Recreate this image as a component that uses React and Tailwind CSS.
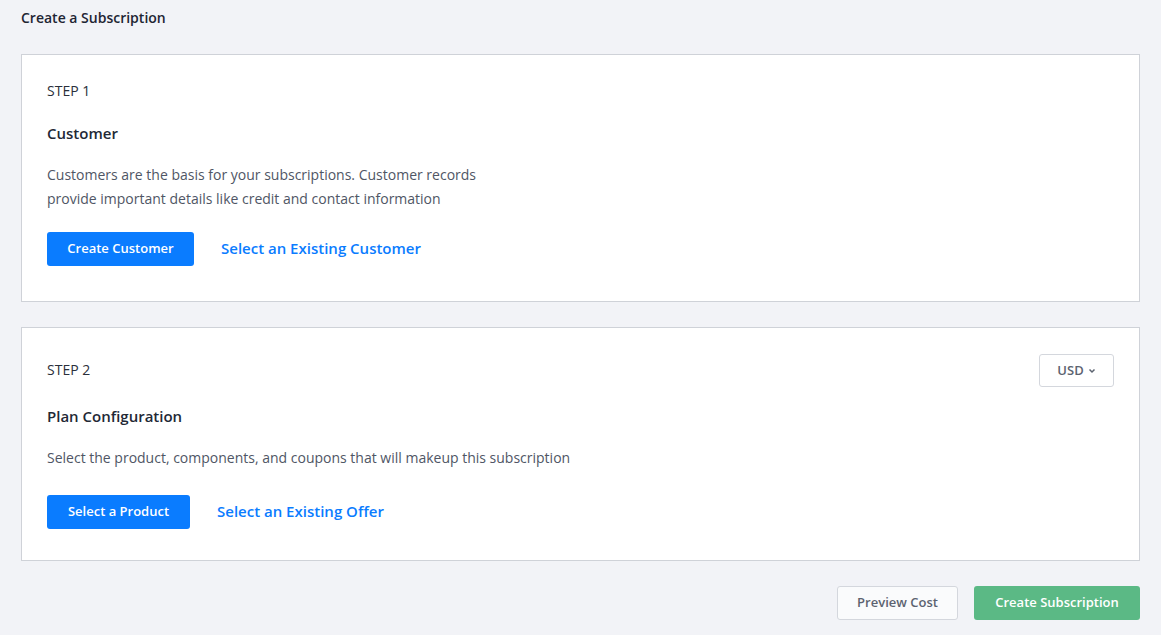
export default function App() {
  const f = { fontFamily: "'Open Sans', Lato, sans-serif" };
  return (
    <div style={f} className="min-h-[635px] bg-[#f2f3f7] px-[21px] pt-[9px] pb-4 text-[#1f2937]">
      <h1 className="text-[14px] font-semibold text-[#1e2533] h-[18px] leading-[18px]">Create a Subscription</h1>
      <div className="mt-[27px] bg-white border border-[#cfd2d8] h-[248px] pl-[25px] pr-[26px] pt-[27px]">
        <div className="text-[14px] text-[#2a2f3a] leading-[18px]">STEP 1</div>
        <div className="mt-6 text-[15px] font-semibold text-[#222835] leading-[18px]">Customer</div>
        <p className="mt-[21px] text-[14px] text-[#4f5665] leading-6">Customers are the basis for your subscriptions. Customer records<br/>provide important details like credit and contact information</p>
        <div className="mt-[21px] flex items-center gap-[27px]">
          <button className="h-[34px] w-[147px] rounded-[3px] bg-[#0a7cff] text-white text-[13px] font-semibold">Create Customer</button>
          <a className="text-[15px] font-semibold text-[#0a7cff] -mt-[2px]">Select an Existing Customer</a>
        </div>
      </div>
      <div className="mt-[25px] bg-white border border-[#cfd2d8] h-[234px] pl-[25px] pr-[25px] pt-[26px]">
        <div className="flex justify-between items-start">
          <div className="text-[14px] text-[#2a2f3a] leading-[18px] pt-[7px]">STEP 2</div>
          <button className="h-[33px] w-[75px] rounded-[3px] border border-[#d4d7dd] text-[13px] font-semibold text-[#5c6370] flex items-center justify-center gap-1">USD <svg width="8" height="8" viewBox="0 0 8 8"><path d="M1.5 2.5 4 5l2.5-2.5" stroke="#5c6370" strokeWidth="1.5" fill="none"/></svg></button>
        </div>
        <div className="mt-[20px] text-[15px] font-semibold text-[#222835] leading-[18px]">Plan Configuration</div>
        <p className="mt-[21px] text-[14px] text-[#4f5665] leading-6">Select the product, components, and coupons that will makeup this subscription</p>
        <div className="mt-[25px] flex items-center gap-[27px]">
          <button className="h-[34px] w-[143px] rounded-[3px] bg-[#0a7cff] text-white text-[13px] font-semibold">Select a Product</button>
          <a className="text-[15px] font-semibold text-[#0a7cff] -mt-[2px]">Select an Existing Offer</a>
        </div>
      </div>
      <div className="mt-[25px] flex justify-end gap-4">
        <button className="h-[34px] w-[121px] rounded-[3px] border border-[#d4d7dd] bg-[#fafbfc] text-[13px] font-semibold text-[#5c6370]">Preview Cost</button>
        <button className="h-[34px] w-[166px] rounded-[3px] bg-[#5bb985] text-white text-[13px] font-semibold">Create Subscription</button>
      </div>
    </div>
  );
}
